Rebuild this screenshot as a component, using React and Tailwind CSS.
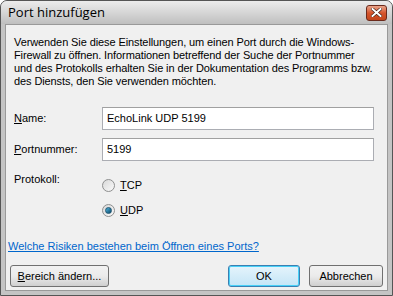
import React from 'react';

const font = { fontFamily: '"Liberation Sans", Arial, sans-serif' };

const Radio = ({ checked, label, underline }) => (
  <label className="flex items-center gap-[5px] h-[14px]">
    <span className="w-[13px] h-[13px] rounded-full border border-[#8e8f8f] bg-gradient-to-br from-[#d8d8d8] to-[#fafafa] flex items-center justify-center">
      {checked && <span className="w-[7px] h-[7px] rounded-full bg-gradient-to-br from-[#4fb6e0] to-[#0b4a6a] border border-[#1e5470]" />}
    </span>
    <span className="text-[11px] text-black">
      <span className="underline">{underline}</span>
      {label}
    </span>
  </label>
);

const Button = ({ children, className = '', focused }) => (
  <button
    className={`h-[22px] rounded-[3px] border text-[11px] text-black flex items-center justify-center ${
      focused
        ? 'border-[#3c7fb1] bg-gradient-to-b from-[#e5f4fc] to-[#c4e5f6] shadow-[inset_0_0_0_1px_#48d1f8]'
        : 'border-[#707070] bg-gradient-to-b from-[#f2f2f2] via-[#ebebeb] to-[#cfcfcf]'
    } ${className}`}
  >
    {children}
  </button>
);

export default function App() {
  return (
    <div className="w-[393px] h-[296px] bg-white" style={font}>
      <div className="w-full h-full flex flex-col rounded-t-[7px] border border-[#555] overflow-hidden bg-[#c4c4c4]">
        {/* title bar */}
        <div className="h-[23px] flex items-center justify-between pl-[7px] pr-[5px] bg-gradient-to-b from-[#ececec] via-[#d6d6d6] to-[#bfbfbf] shrink-0">
          <span className="text-[13px] text-black" style={{ fontFamily: '"Open Sans", "Liberation Sans", sans-serif' }}>
            Port hinzufügen
          </span>
          <div className="w-[21px] h-[16px] rounded-[3px] border border-[#6b2a1c] bg-gradient-to-b from-[#e8a48a] via-[#d5542b] to-[#c2461c] flex items-center justify-center">
            <svg width="11" height="9" viewBox="0 0 11 9">
              <path d="M1.5 1 L9.5 8 M9.5 1 L1.5 8" stroke="#3a1a10" strokeWidth="3.2" strokeLinecap="square" />
              <path d="M1.5 1 L9.5 8 M9.5 1 L1.5 8" stroke="#fff" strokeWidth="2" strokeLinecap="square" />
            </svg>
          </div>
        </div>
        {/* body */}
        <div className="flex-1 px-[4px] pb-[4px] flex flex-col">
          <div className="flex-1 border border-[#999] bg-[#f0f0f0] flex flex-col pl-[8px] pr-[13px] pt-[11px]">
            <p className="text-[11px] leading-[13px] text-black whitespace-nowrap tracking-[-0.1px]">
              Verwenden Sie diese Einstellungen, um einen Port durch die Windows-
              <br />
              Firewall zu öffnen. Informationen betreffend der Suche der Portnummer
              <br />
              und des Protokolls erhalten Sie in der Dokumentation des Programms bzw.
              <br />
              des Diensts, den Sie verwenden möchten.
            </p>

            <div className="mt-[19px] flex items-center">
              <span className="w-[88px] text-[11px]"><span className="underline">N</span>ame:</span>
              <div className="flex-1 h-[23px] bg-white border border-[#abadb3] border-t-[#a0a0a0] flex items-center pl-[4px] text-[11px]">
                EchoLink UDP 5199
              </div>
            </div>
            <div className="mt-[8px] flex items-center">
              <span className="w-[88px] text-[11px]"><span className="underline">P</span>ortnummer:</span>
              <div className="flex-1 h-[23px] bg-white border border-[#abadb3] border-t-[#a0a0a0] flex items-center pl-[4px] text-[11px]">
                5199
              </div>
            </div>

            <div className="mt-[10px] flex">
              <span className="w-[88px] text-[11px]">Protokoll:</span>
              <div className="flex flex-col gap-[11px] pt-[7px]">
                <Radio label="CP" underline="T" />
                <Radio checked label="DP" underline="U" />
              </div>
            </div>

            <div className="mt-[16px] -ml-[6px]">
              <span className="text-[11px] text-[#0066cc] underline">Welche Risiken bestehen beim Öffnen eines Ports?</span>
            </div>

            <div className="mt-[8px] flex items-center -ml-[4px] -mr-[9px]">
              <Button className="w-[99px]">
                <span className="underline">B</span>ereich ändern...
              </Button>
              <div className="flex-1" />
              <Button focused className="w-[72px]">OK</Button>
              <Button className="w-[74px] ml-[9px]">Abbrechen</Button>
            </div>
          </div>
        </div>
      </div>
    </div>
  );
}
